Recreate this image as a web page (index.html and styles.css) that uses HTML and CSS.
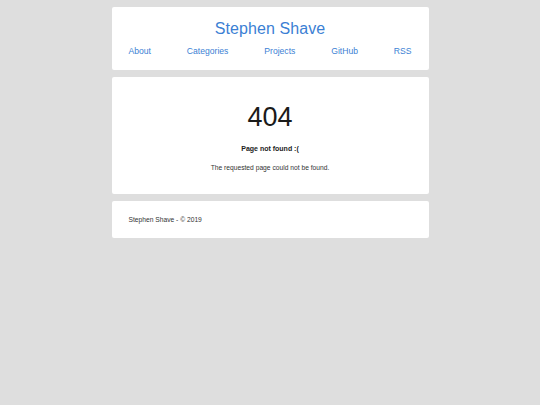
FILE: index.html
```html
<!DOCTYPE html>
<html>
<head>
<meta charset="utf-8">
<link rel="stylesheet" href="styles.css">
</head>
<body>
<div class="wrap">
  <header class="card header">
    <h1 class="title"><a href="#">Stephen Shave</a></h1>
    <nav class="nav">
      <a href="#">About</a>
      <a href="#">Categories</a>
      <a href="#">Projects</a>
      <a href="#">GitHub</a>
      <a href="#">RSS</a>
    </nav>
  </header>
  <main class="card content">
    <div class="code">404</div>
    <p class="sub">Page not found :(</p>
    <p class="msg">The requested page could not be found.</p>
  </main>
  <footer class="card footer">Stephen Shave - © 2019</footer>
</div>
</body>
</html>
```
FILE: styles.css
```css
html, body {
  margin: 0;
  padding: 0;
  background: #dedede;
  font-family: "Liberation Sans", Arial, sans-serif;
  color: #222;
}
.wrap {
  width: 317px;
  margin: 0 auto;
  padding-top: 7px;
  display: flex;
  flex-direction: column;
  gap: 7px;
}
.card {
  background: #fff;
  border-radius: 2px;
  box-sizing: border-box;
}
a { color: #3b7fd4; text-decoration: none; }
.header {
  height: 63px;
  padding: 11px 17px 0;
}
.title {
  margin: 0;
  text-align: center;
  font-weight: normal;
  font-size: 16px;
  line-height: 22px;
  letter-spacing: 0.1px;
}
.nav {
  display: flex;
  justify-content: space-between;
  margin-top: 5px;
  font-size: 8.6px;
  line-height: 12px;
}
.content {
  height: 117px;
  text-align: center;
  padding-top: 24px;
}
.code {
  font-size: 27px;
  line-height: 32px;
  color: #1a1a1a;
}
.sub {
  margin: 11px 0 0;
  font-size: 7px;
  font-weight: bold;
  line-height: 10px;
}
.msg {
  margin: 9px 0 0;
  font-size: 6.7px;
  line-height: 10px;
  color: #333;
}
.footer {
  height: 37px;
  padding: 13px 17px 0;
  font-size: 6.7px;
  line-height: 11px;
  color: #333;
}
```
